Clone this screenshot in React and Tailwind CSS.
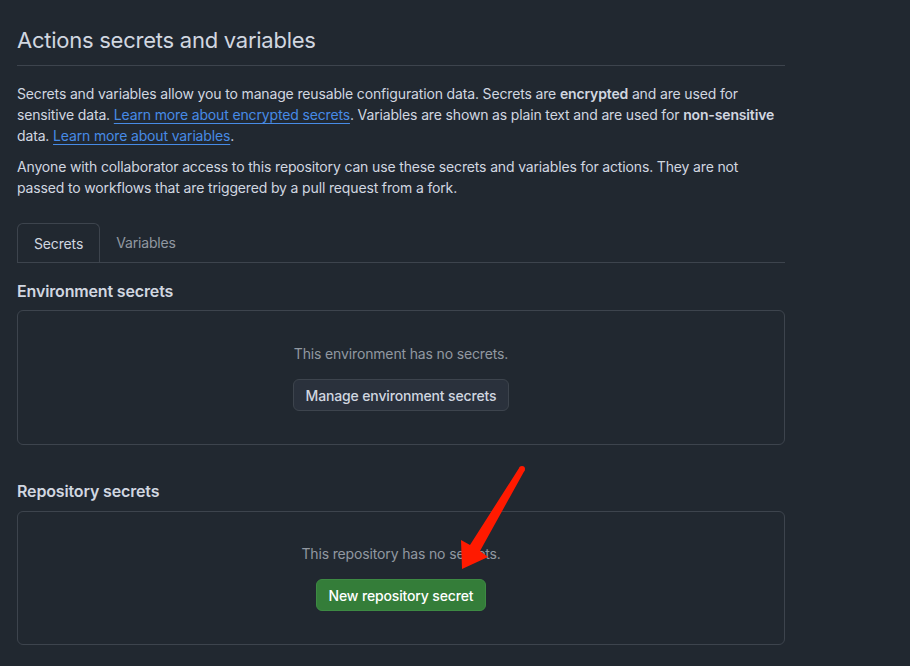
import React from "react";

export default function App() {
  return (
    <div className="relative min-h-[666px] w-full bg-[#212830] text-[#d1d7e0] tracking-[-0.15px]" style={{ fontFamily: "Inter, 'Noto Sans', sans-serif" }}>
      <div className="w-[768px] ml-[17px] pt-[24px]">
        <h1 className="text-[22px] leading-[32px] font-normal tracking-[-0.25px] text-[#d1d7e0] pb-[9px] border-b border-[#3d444d]">Actions secrets and variables</h1>
        <p className="mt-[17px] text-[14px] leading-[21px]">
          Secrets and variables allow you to manage reusable configuration data. Secrets are <b className="font-semibold">encrypted</b> and are used for sensitive data.{" "}
          <a className="text-[#478be6] underline underline-offset-[3px]">Learn more about encrypted secrets</a>. Variables are shown as plain text and are used for <b className="font-semibold">non-sensitive</b> data.{" "}
          <a className="text-[#478be6] underline underline-offset-[3px]">Learn more about variables</a>.
        </p>
        <p className="mt-[10px] text-[14px] leading-[21px]">
          Anyone with collaborator access to this repository can use these secrets and variables for actions. They are not passed to workflows that are triggered by a pull request from a fork.
        </p>
        <div className="mt-[25px] flex border-b border-[#3d444d] text-[14px]">
          <div className="px-[16px] h-[39px] flex items-center border border-[#3d444d] border-b-0 rounded-t-[6px] -mb-px bg-[#212830] text-[#d1d7e0]">Secrets</div>
          <div className="px-[16px] h-[39px] flex items-center text-[#9198a1]">Variables</div>
        </div>
        <h2 className="mt-[16px] text-[16px] leading-[24px] font-semibold">Environment secrets</h2>
        <div className="mt-[7px] h-[135px] border border-[#3d444d] rounded-[6px] flex flex-col items-center pt-[32px]">
          <p className="text-[14px] leading-[21px] text-[#9198a1]">This environment has no secrets.</p>
          <button className="mt-[15px] h-[32px] px-[12px] rounded-[6px] border border-[#3d444d] bg-[#2a313c] text-[14px] font-medium text-[#d1d7e0]">Manage environment secrets</button>
        </div>
        <h2 className="mt-[34px] text-[16px] leading-[24px] font-semibold">Repository secrets</h2>
        <div className="mt-[8px] h-[134px] border border-[#3d444d] rounded-[6px] flex flex-col items-center pt-[31px]">
          <p className="text-[14px] leading-[21px] text-[#9198a1]">This repository has no secrets.</p>
          <button className="mt-[15px] h-[32px] px-[12px] rounded-[6px] border border-[#3d8a43] bg-[#347d39] text-[14px] font-medium text-white">New repository secret</button>
        </div>
      </div>
      <svg className="absolute left-0 top-0 pointer-events-none" width="910" height="666">
        <polygon points="524.6,470.5 480,551 488,557 462,569 461,540 470,545 519.4,467.5" fill="#ff1a00" />
        <circle cx="522" cy="469" r="3" fill="#ff1a00" />
      </svg>
    </div>
  );
}
